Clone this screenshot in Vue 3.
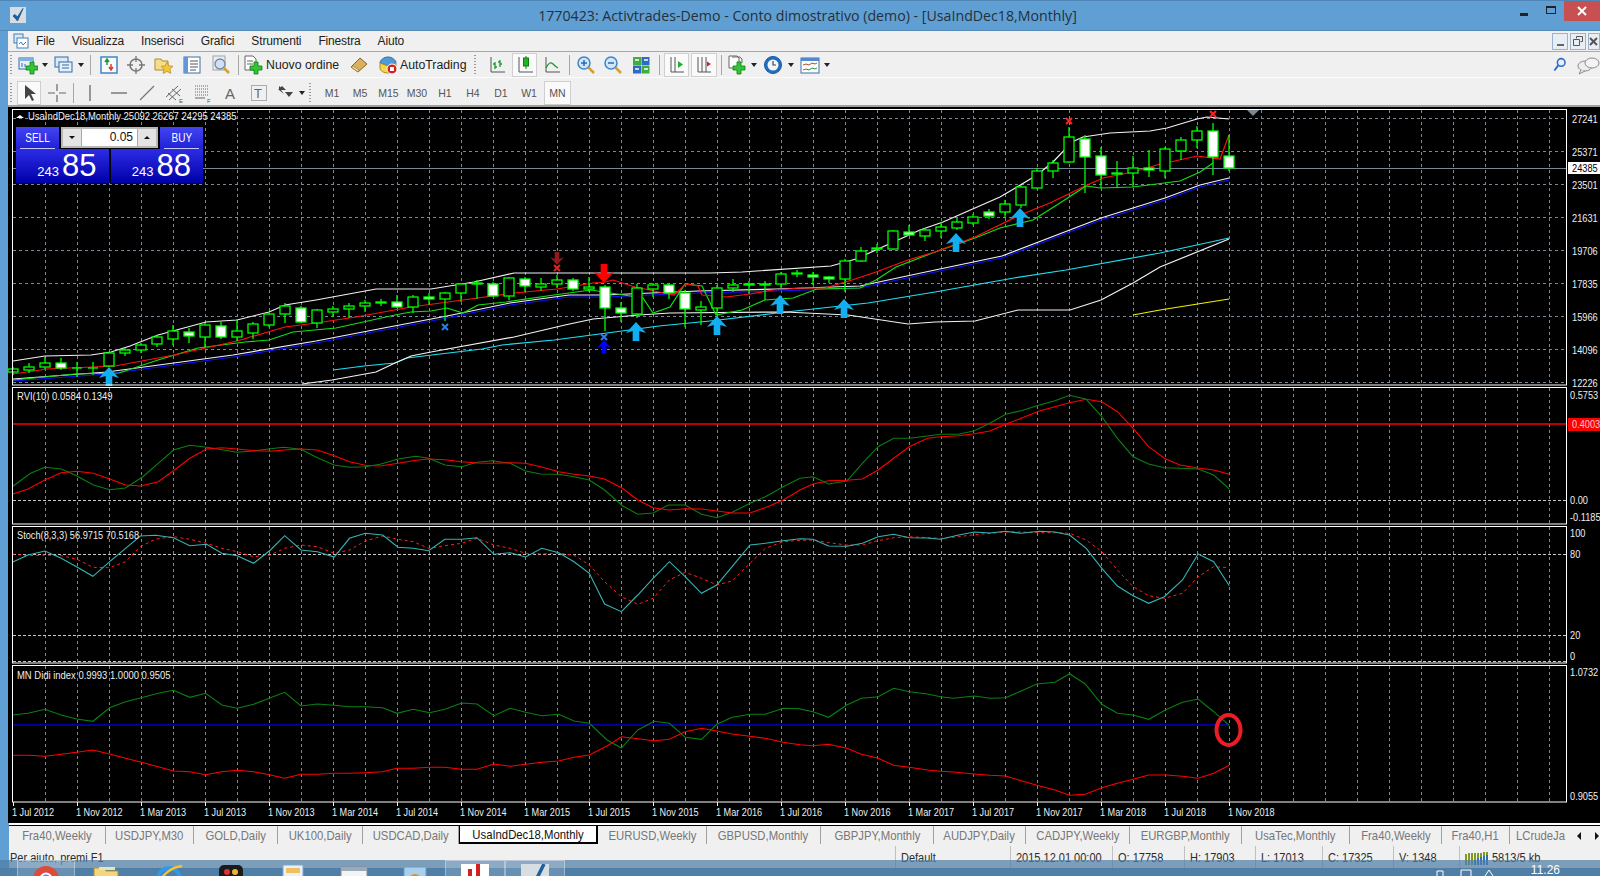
<template>
  <div class="page">
    <div class="window">
      <div class="titlebar">
        <svg class="appicon" viewBox="0 0 16 16"><rect width="16" height="16" fill="#d8dde2" /><path d="M3 9l3 3 1.500 2L13 1.500 7.500 10 5 7.500z" fill="#1c5f9e" stroke="#1c5f9e" /></svg>
        <span class="title">1770423: Activtrades-Demo - Conto dimostrativo (demo) - [UsaIndDec18,Monthly]</span>
        <span class="winbtn"><i class="glyph-min"></i></span>
        <span class="winbtn"><i class="glyph-max"></i></span>
        <span class="winbtn close">
          <svg width="10" height="10" viewBox="0 0 10 10"><path d="M1 1l8 8M9 1L1 9" stroke="#fff" stroke-width="2" /></svg>
        </span>
      </div>

      <div class="menubar">
        <svg class="menuicon" viewBox="0 0 16 16"><rect x="1" y="1" width="9" height="9" fill="#dbe8f5" stroke="#3f7fc0" /><rect x="4" y="5" width="11" height="10" fill="#fff" stroke="#3f7fc0" /><path d="M6 11l2-2 2 3 3-3" fill="none" stroke="#3f7fc0" /></svg>
        <span v-for="m in menus" :key="m" class="menuitem">{{ m }}</span>
        <div class="mdi">
          <span class="mdibtn"><i class="m-min"></i></span>
          <span class="mdibtn"><svg width="10" height="10" viewBox="0 0 10 10"><path d="M3.500 2.500V.5h6v5h-2M.5 3.500h6v6h-6z" fill="none" stroke="#555" /></svg></span>
          <span class="mdibtn last"><svg width="9" height="9" viewBox="0 0 9 9"><path d="M1 1l7 7M8 1L1 8" stroke="#555" stroke-width="2" /></svg></span>
        </div>
      </div>

      <div class="toolbar row1">
        <template v-for="(t, i) in row1" :key="i">
          <span v-if="t.k === 'grip'" class="grip" :style="{ width: t.w + 'px' }"></span>
          <span v-else-if="t.k === 'sep'" class="sep" :style="{ width: t.w + 'px' }"></span>
          <span v-else-if="t.k === 'drop'" class="drop" :style="{ width: t.w + 'px' }"><i></i></span>
          <span v-else-if="t.k === 'gap'" :style="{ width: t.w + 'px' }"></span>
          <span v-else-if="t.k === 'text'" class="tblabel" :style="{ width: t.w + 'px' }">{{ t.text }}</span>
          <span v-else class="tbbtn" :class="{ active: t.on }" :style="{ width: t.w + 'px' }">
            <svg width="20" height="20" viewBox="0 0 20 20" v-html="icons[t.k]"></svg>
          </span>
        </template>
        <div class="tbright">
          <svg width="20" height="20" viewBox="0 0 20 20" v-html="icons.search"></svg>
          <svg class="chat" width="24" height="20" viewBox="0 0 24 20" v-html="icons.chat"></svg>
        </div>
      </div>

      <div class="toolbar row2">
        <template v-for="(t, i) in row2" :key="i">
          <span v-if="t.k === 'grip'" class="grip" :style="{ width: t.w + 'px' }"></span>
          <span v-else-if="t.k === 'sep'" class="sep" :style="{ width: t.w + 'px' }"></span>
          <span v-else-if="t.k === 'drop'" class="drop" :style="{ width: t.w + 'px' }"><i></i></span>
          <span v-else-if="t.k === 'gap'" :style="{ width: t.w + 'px' }"></span>
          <span v-else-if="t.k === 'tf'" class="tbbtn tf" :class="{ active: t.on }" :style="{ width: t.w + 'px' }">{{ t.text }}</span>
          <span v-else class="tbbtn" :class="{ active: t.on }" :style="{ width: t.w + 'px' }">
            <svg width="20" height="20" viewBox="0 0 20 20" v-html="icons[t.k]"></svg>
          </span>
        </template>
      </div>

      <div class="chart">
        <!-- main pane -->
        <svg class="pane" width="1592" height="279" viewBox="8 107 1592 279">
          <g class="grid">
            <line v-for="x in vgrid" :key="x" :x1="x" :x2="x" y1="110" y2="385" />
            <line v-for="p in prices" :key="p[0]" x1="13" x2="1566" :y1="p[1]" :y2="p[1]" />
          </g>
          <line class="priceline" x1="13" x2="1566" y1="168" y2="168" />
          <polyline v-for="l in mainLines" :key="l.id" class="series main" :stroke="l.color" :points="l.points" />
          <g v-for="c in candles" :key="c.x">
            <line class="wick" :x1="c.x" :x2="c.x" :y1="c.high" :y2="c.low" />
            <line v-if="c.top === c.bot" class="wick" :x1="c.x - 5" :x2="c.x + 5" :y1="c.top" :y2="c.top" />
            <rect v-else class="body" :class="{ bear: c.bear }" :x="c.x - 5" :width="10" :y="c.top" :height="c.bot - c.top" />
          </g>
          <path v-for="a in upArrows" :key="a" :d="arrowUp(a[0], a[1], 19, 10)" fill="#12aef0" />
          <path :d="arrowUp(604, 340, 13, 7)" fill="#0000ff" />
          <path :d="arrowDown(604, 283, 19, 10)" fill="#ff0000" />
          <path :d="arrowDown(557, 265, 13, 7)" fill="#8a1c1c" />
          <path v-for="m in marks" :key="m[0]" :d="cross(m[0], m[1])" :stroke="m[2]" class="mark" />
          <path d="M1246 109h14l-7 7z" fill="#7a8794" />
          <rect class="frame" x="12.500" y="109.500" width="1554" height="275.500" />
          <path d="M16 118l4-3 4 3z" fill="#fff" />
          <text class="lbl" transform="translate(28 120) scale(.86 1)">UsaIndDec18,Monthly  25092 26267 24295 24385</text>
          <text v-for="p in prices" :key="'t' + p[0]" class="lbl" :transform="`translate(1572 ${p[1] + 5}) scale(.84 1)`">{{ p[0] }}</text>
          <rect x="1568" y="162" width="32" height="12" fill="#fff" />
          <text class="lbl dark" transform="translate(1572 172) scale(.84 1)">24385</text>
        </svg>

        <!-- RVI -->
        <svg class="pane" width="1592" height="139" viewBox="8 386 1592 139">
          <g class="grid"><line v-for="x in vgrid" :key="x" :x1="x" :x2="x" y1="388" y2="524" /></g>
          <line class="level" x1="13" x2="1566" y1="500" y2="500" />
          <line x1="13" x2="1566" y1="424" y2="424" stroke="#ff0000" stroke-width="1.500" />
          <polyline class="series" stroke="#0a8010" :points="rviGreen" />
          <polyline class="series" stroke="#ff0000" :points="rviRed" />
          <rect class="frame" x="12.500" y="387.500" width="1554" height="136.500" />
          <text class="lbl" transform="translate(17 400) scale(.86 1)">RVI(10) 0.0584 0.1349</text>
          <text class="lbl" transform="translate(1570 399) scale(.84 1)">0.5753</text>
          <rect x="1568" y="418" width="32" height="13" fill="#ff0000" />
          <text class="lbl" fill-opacity=".85" transform="translate(1572 428) scale(.84 1)">0.4003</text>
          <text class="lbl" transform="translate(1570 504) scale(.84 1)">0.00</text>
          <text class="lbl" transform="translate(1570 521) scale(.84 1)">-0.1185</text>
        </svg>

        <!-- Stochastic -->
        <svg class="pane" width="1592" height="139" viewBox="8 525 1592 139">
          <g class="grid"><line v-for="x in vgrid" :key="x" :x1="x" :x2="x" y1="527" y2="663" /></g>
          <line class="level" x1="13" x2="1566" y1="554" y2="554" />
          <line class="level" x1="13" x2="1566" y1="635" y2="635" />
          <line class="level" x1="13" x2="1566" y1="661" y2="661" />
          <polyline class="series thin" stroke="#ff2020" stroke-dasharray="3 3" :points="stochRed" />
          <polyline class="series" stroke="#35b5b5" :points="stochTeal" />
          <rect class="frame" x="12.500" y="526.500" width="1554" height="136.500" />
          <text class="lbl" transform="translate(17 539) scale(.84 1)">Stoch(8,3,3) 56.9715 70.5168</text>
          <text class="lbl" transform="translate(1570 537) scale(.84 1)">100</text>
          <text class="lbl" transform="translate(1570 558) scale(.84 1)">80</text>
          <text class="lbl" transform="translate(1570 639) scale(.84 1)">20</text>
          <text class="lbl" transform="translate(1570 660) scale(.84 1)">0</text>
        </svg>

        <!-- Didi index + time axis -->
        <svg class="pane" width="1592" height="159" viewBox="8 664 1592 159">
          <g class="grid"><line v-for="x in vgrid" :key="x" :x1="x" :x2="x" y1="666" y2="802" /></g>
          <line x1="13" x2="1229" y1="725" y2="725" stroke="#0000c8" stroke-width="1.300" />
          <polyline class="series" stroke="#0a8010" :points="didiGreen" />
          <polyline class="series" stroke="#ff0000" :points="didiRed" />
          <ellipse cx="1228.500" cy="730" rx="12" ry="15" fill="none" stroke="#ee1c25" stroke-width="4" />
          <rect class="frame" x="12.500" y="665.500" width="1554" height="136.500" />
          <text class="lbl" transform="translate(17 679) scale(.86 1)">MN Didi index 0.9993 1.0000 0.9505</text>
          <text class="lbl" transform="translate(1570 676) scale(.84 1)">1.0732</text>
          <text class="lbl" transform="translate(1570 800) scale(.84 1)">0.9055</text>
          <g v-for="t in timeLabels" :key="t.x">
            <line class="tick" :x1="t.x" :x2="t.x" y1="802" y2="806" />
            <text class="lbl" :transform="`translate(${t.x - 1} 816) scale(.83 1)`">{{ t.text }}</text>
          </g>
        </svg>

        <!-- one click trading panel -->
        <div class="oneclick">
          <div class="octop">
            <span class="ocbtn"><em>SELL</em></span>
            <div class="lot">
              <span class="lotbtn"><i class="tri-down"></i></span>
              <span class="lotval">0.05</span>
              <span class="lotbtn"><i class="tri-up"></i></span>
            </div>
            <span class="ocbtn"><em>BUY</em></span>
          </div>
          <div class="ocprices">
            <div class="ocprice"><small>243</small><b>85</b></div>
            <div class="ocprice"><small>243</small><b>88</b></div>
          </div>
        </div>
      </div>

      <div class="tabs">
        <span v-for="t in tabs" :key="t.name + t.w" class="tab" :class="{ active: t.on, tail: t.tail }" :style="{ width: t.w + 'px' }"><em>{{ t.name }}</em></span>
        <span class="tabnav"><i class="nav-l"></i><i class="nav-r"></i></span>
      </div>

      <div class="status">
        <span v-for="s in status" :key="s.text" class="cell" :style="{ width: s.w + 'px' }"><em>{{ s.text }}</em></span>
        <span class="cell conn">
          <svg width="24" height="14" viewBox="0 0 24 14"><path d="M1 14V3M4 14V2M7 14V2M10 14V2M13 14V2M16 14V2M19 14V1M22 14V1" stroke="#7f9a1e" stroke-width="2" /><path d="M10 14V9M13 14V7M16 14V6M19 14V5M22 14V4" stroke="#2f6fc0" stroke-width="2" /></svg>
          <em>5813/5 kb</em>
        </span>
      </div>

      <div class="taskbar">
        <span class="tkbtn" :class="{ lit: k.lit }" v-for="k in taskItems" :key="k.id" :style="{ width: k.w + 'px' }">
          <svg width="30" height="30" viewBox="0 0 30 30" v-html="k.svg"></svg>
        </span>
        <div class="tray">
          <svg width="70" height="8" viewBox="0 0 70 8"><path d="M2 8V3h6v5M26 8V2h10v6M50 8l4-6 4 6" fill="none" stroke="#fff" /></svg>
          <span class="clock">11.26</span>
        </div>
      </div>
    </div>
  </div>
</template>

<script setup>
const menus = ["File", "Visualizza", "Inserisci", "Grafici", "Strumenti", "Finestra", "Aiuto"];

const plus = (x, y) =>
  `<path d="M${x - 2} ${y - 6}h4v4h4v4h-4v4h-4v-4h-4v-4h4z" fill="#35c435" stroke="#0b7d12" stroke-width=".8"/>`;

const icons = {
  newchart: `<rect x="1" y="3" width="14" height="11" fill="#e6f0fa" stroke="#2f6aa8"/><rect x="1" y="3" width="14" height="3" fill="#7fb0e0"/><path d="M4 12V8M7 12V9" stroke="#2f6aa8"/>${plus(14, 13)}`,
  profile: `<rect x="1" y="2" width="13" height="10" fill="#dbe8f5" stroke="#2f6aa8"/><rect x="5" y="7" width="13" height="10" fill="#e6f0fa" stroke="#2f6aa8"/><path d="M8 10h7M8 13h7" stroke="#2f6aa8"/>`,
  market: `<rect x="2" y="2" width="16" height="16" fill="#f7fbff" stroke="#3f86c6" stroke-width="1.500"/><path d="M8 10V5M6 7l2-3 2 3" fill="none" stroke="#1a9a2a" stroke-width="1.500"/><path d="M12 9v6M10 12l2 3 2-3" fill="none" stroke="#d8402a" stroke-width="1.500"/>`,
  crosshair: `<circle cx="10" cy="10" r="6" fill="none" stroke="#777" stroke-width="1.500"/><path d="M10 1v6M10 13v6M1 10h6M13 10h6" stroke="#777" stroke-width="1.300"/>`,
  folderstar: `<path d="M1 4h6l1 2h6v9H1z" fill="#f6dd8a" stroke="#b08a2c"/><path d="M13 7l1.800 3.800 4.200.5-3 2.900.8 4.200-3.800-2-3.800 2 .8-4.200-3-2.900 4.200-.5z" fill="#f2c53a" stroke="#b08a2c" stroke-width=".7"/>`,
  list: `<rect x="2" y="2" width="16" height="16" fill="#fff" stroke="#3f6fa8"/><rect x="2" y="2" width="4" height="16" fill="#5f9ad6"/><path d="M8 6h8M8 9h8M8 12h8M8 15h6" stroke="#555"/>`,
  magdoc: `<rect x="2" y="1" width="12" height="14" fill="#e8eef4" stroke="#9aa6b2"/><circle cx="9" cy="9" r="5" fill="#cfe2f5" stroke="#7a8794" stroke-width="1.300"/><path d="M13 13l5 5" stroke="#d8a020" stroke-width="2.500"/>`,
  order: `<path d="M2 1h8l3 3v11H2z" fill="#fff" stroke="#666"/><path d="M4 6h6M4 9h6" stroke="#666"/>${plus(13, 13)}`,
  book: `<path d="M2 12L11 3l7 6-9 8z" fill="#d8b060" stroke="#8a6420"/><path d="M2 12l7 5 1-2-6-4z" fill="#f4e0a8" stroke="#8a6420" stroke-width=".6"/>`,
  auto: `<path d="M2 8c0-3 4-6 8-6s8 3 8 6l-8 3z" fill="#4f9ad8" stroke="#2f6aa8"/><path d="M2 8l8 3 8-3v5c0 3-4 5-8 5s-8-2-8-5z" fill="#f2d54a" stroke="#b08a2c"/><circle cx="14" cy="14" r="5" fill="#d02020" stroke="#fff"/><rect x="12" y="12" width="4" height="4" fill="#fff"/>`,
  bars: `<path d="M4 2v15h14" fill="none" stroke="#555"/><path d="M8 14V7M8 9h-2M8 12h2M13 12V5M13 7h-2M13 9h2" fill="none" stroke="#1a9a2a" stroke-width="1.300"/>`,
  candle: `<path d="M4 2v15h14" fill="none" stroke="#555"/><path d="M11 1v13" stroke="#1a7a2a"/><rect x="8.500" y="3" width="5" height="8" fill="#22b422" stroke="#0b7d12"/>`,
  line: `<path d="M4 2v15h14" fill="none" stroke="#555"/><path d="M4 13c3-6 5-6 7-4s3 3 5 4" fill="none" stroke="#1a9a2a" stroke-width="1.300"/>`,
  zoomin: `<circle cx="8" cy="8" r="6" fill="#cfe6fa" stroke="#3f86c6" stroke-width="1.500"/><path d="M5 8h6M8 5v6" stroke="#2f6aa8" stroke-width="1.500"/><path d="M12.500 12.500l5.500 5.500" stroke="#d8a020" stroke-width="2.500"/>`,
  zoomout: `<circle cx="8" cy="8" r="6" fill="#cfe6fa" stroke="#3f86c6" stroke-width="1.500"/><path d="M5 8h6" stroke="#2f6aa8" stroke-width="1.500"/><path d="M12.500 12.500l5.500 5.500" stroke="#d8a020" stroke-width="2.500"/>`,
  tile: `<rect x="2" y="2" width="8" height="8" fill="#3fae3f"/><rect x="10.500" y="2" width="8" height="8" fill="#2f6ac8"/><rect x="2" y="10.500" width="8" height="8" fill="#2f6ac8"/><rect x="10.500" y="10.500" width="8" height="8" fill="#3fae3f"/><path d="M4 5h4M13 5h4M4 14h4M13 14h4" stroke="#fff" stroke-width="1.500"/>`,
  scroll: `<path d="M4 2v15h13M8 2v15" fill="none" stroke="#555"/><path d="M11 6v7l5-3.500z" fill="#1fb02f"/>`,
  shift: `<path d="M4 2v15h13M8 2v15" fill="none" stroke="#555"/><path d="M12 2v15" stroke="#555"/><path d="M17 9l-4-2.500v5z" fill="#d02020"/>`,
  template: `<path d="M2 1h8l2 2v10H2z" fill="#fff" stroke="#666"/><path d="M5 2h8l2 2v4" fill="none" stroke="#666"/>${plus(12, 13)}`,
  clock: `<circle cx="10" cy="10" r="8.500" fill="#1f6ec0" stroke="#155a9c"/><circle cx="10" cy="10" r="5.500" fill="#f2f6fa"/><path d="M10 6v4h3" fill="none" stroke="#444" stroke-width="1.200"/>`,
  periods: `<rect x="1" y="3" width="18" height="15" fill="#fff" stroke="#3f6fa8"/><rect x="1" y="3" width="18" height="3" fill="#4f8ad0"/><path d="M3 10l3-1 3 1 3-2 3 1 2-1" fill="none" stroke="#b04a2a"/><path d="M3 15l3-1 3 1 3-2 3 1 2-1" fill="none" stroke="#1a9a2a"/>`,
  search: `<circle cx="12" cy="7" r="4.500" fill="#e6f0fa" stroke="#2f6ac8" stroke-width="1.800"/><path d="M8.500 10.500l-4.500 6" stroke="#2f6ac8" stroke-width="2.200"/>`,
  chat: `<ellipse cx="9" cy="11" rx="7" ry="5" fill="#eee" stroke="#8a8a8a"/><path d="M5 15l-2 4 6-3" fill="#eee" stroke="#8a8a8a"/><ellipse cx="16" cy="8" rx="7" ry="5" fill="#f4f4f4" stroke="#8a8a8a"/>`,
  cursor: `<path d="M6 2v14l4-4 3 6 2-1-3-6h5z" fill="#444"/>`,
  cross: `<path d="M10 1v7M10 12v7M1 10h7M12 10h7" stroke="#666" stroke-width="1.200"/>`,
  vline: `<path d="M10 2v16" stroke="#666" stroke-width="1.300"/>`,
  hline: `<path d="M2 10h16" stroke="#666" stroke-width="1.300"/>`,
  trend: `<path d="M3 17L17 3" stroke="#777" stroke-width="1.300"/>`,
  channel: `<path d="M1 14L13 3M4 17L16 6M3 10l8 7M7 6l8 7" stroke="#666"/><text x="14" y="20" font-size="6" font-family="Liberation Sans" fill="#555">E</text>`,
  fibo: `<path d="M2 3h14M2 6h14M2 9h14M2 12h14" stroke="#666" stroke-dasharray="1 1"/><path d="M2 15h10" stroke="#666"/><text x="14" y="20" font-size="6" font-family="Liberation Sans" fill="#555">F</text>`,
  atext: `<text x="4" y="16" font-size="15" font-family="Liberation Sans" fill="#666">A</text>`,
  ttext: `<rect x="2.500" y="2.500" width="15" height="15" fill="none" stroke="#666" stroke-dasharray="1 1"/><text x="5" y="15" font-size="13" font-family="Liberation Sans" fill="#666">T</text>`,
  updown: `<path d="M4 3l5 4H6l3 4-5-4zM10 9h8l-4 5z" fill="#444"/><path d="M7 3l4 4H3z" fill="#444"/>`,
};

const row1 = [
  { k: "grip", w: 8 }, { k: "newchart", w: 24 }, { k: "drop", w: 10 }, { k: "profile", w: 28 }, { k: "drop", w: 6 },
  { k: "sep", w: 12 }, { k: "market", w: 26 }, { k: "crosshair", w: 28 }, { k: "folderstar", w: 28 }, { k: "list", w: 28 },
  { k: "magdoc", w: 30 }, { k: "sep", w: 4 }, { k: "order", w: 26 }, { k: "text", w: 76, text: "Nuovo ordine" },
  { k: "book", w: 33 }, { k: "auto", w: 25 }, { k: "text", w: 68, text: "AutoTrading" }, { k: "gap", w: 4 },
  { k: "grip", w: 10 }, { k: "gap", w: 2 }, { k: "bars", w: 26 }, { k: "gap", w: 2 }, { k: "candle", w: 25, on: true }, { k: "gap", w: 2 },
  { k: "line", w: 26 }, { k: "sep", w: 8 }, { k: "zoomin", w: 26 }, { k: "zoomout", w: 28 }, { k: "tile", w: 28 }, { k: "sep", w: 8 },
  { k: "gap", w: 1 }, { k: "scroll", w: 25, on: true }, { k: "gap", w: 2 }, { k: "shift", w: 26, on: true }, { k: "sep", w: 8 },
  { k: "template", w: 24 }, { k: "drop", w: 9 }, { k: "gap", w: 2 }, { k: "clock", w: 26 }, { k: "drop", w: 9 }, { k: "gap", w: 2 },
  { k: "periods", w: 26 }, { k: "drop", w: 8 },
];

const row2 = [
  { k: "grip", w: 8 }, { k: "gap", w: 1 }, { k: "cursor", w: 24, on: true }, { k: "gap", w: 2 }, { k: "cross", w: 28 }, { k: "sep", w: 5 },
  { k: "vline", w: 28 }, { k: "hline", w: 29 }, { k: "trend", w: 28 }, { k: "channel", w: 28 }, { k: "fibo", w: 28 }, { k: "atext", w: 28 },
  { k: "ttext", w: 28 }, { k: "updown", w: 24 }, { k: "drop", w: 10 }, { k: "grip", w: 9 }, { k: "gap", w: 2 },
  { k: "tf", w: 28, text: "M1" }, { k: "tf", w: 28, text: "M5" }, { k: "tf", w: 29, text: "M15" }, { k: "tf", w: 28, text: "M30" },
  { k: "tf", w: 28, text: "H1" }, { k: "tf", w: 28, text: "H4" }, { k: "tf", w: 28, text: "D1" }, { k: "tf", w: 28, text: "W1" },
  { k: "gap", w: 1 }, { k: "tf", w: 27, text: "MN", on: true },
];

const vgrid = Array.from({ length: 48 }, (_, i) => 45 + 32 * i);

const prices = [27241, 25371, 23501, 21631, 19706, 17835, 15966, 14096, 12226].map((p, i) => [p, 118 + 33 * i]);

// bars: high, body top, body bottom, low, bear (page pixels)
const bars = [
  [367, 369, 372, 375], [363, 367, 370, 373], [357, 363, 367, 369], [358, 363, 368, 370, 1], [362, 368, 368, 377], [362, 368, 368, 375],
  [352, 353, 366, 367], [348, 350, 353, 356], [343, 345, 350, 353], [335, 337, 344, 347], [325, 331, 339, 345], [328, 332, 336, 343, 1],
  [323, 325, 337, 348], [322, 326, 337, 339, 1], [319, 331, 337, 341], [322, 324, 333, 339], [312, 314, 325, 327], [303, 306, 314, 323],
  [306, 308, 322, 323, 1], [309, 310, 323, 328], [306, 309, 312, 317], [303, 306, 309, 318], [300, 303, 306, 312], [299, 302, 303, 306],
  [295, 302, 307, 308, 1], [295, 297, 307, 313], [293, 297, 299, 305, 1], [292, 293, 299, 321], [283, 284, 293, 302], [280, 283, 284, 299],
  [282, 284, 296, 297, 1], [277, 278, 296, 300], [277, 279, 286, 292, 1], [278, 284, 287, 291], [275, 280, 284, 288], [278, 280, 289, 291, 1],
  [277, 287, 289, 292], [285, 287, 308, 331, 1], [302, 308, 313, 322, 1], [284, 288, 314, 318], [283, 285, 289, 297], [283, 285, 293, 299, 1],
  [290, 293, 309, 327, 1], [301, 307, 310, 325], [285, 288, 308, 315], [279, 285, 288, 292], [281, 284, 285, 294], [281, 284, 285, 300],
  [272, 274, 284, 288], [270, 273, 274, 277], [272, 275, 277, 285, 1], [276, 277, 279, 283, 1], [259, 261, 279, 292], [247, 251, 261, 262],
  [244, 248, 249, 253], [230, 231, 249, 250], [225, 232, 235, 236, 1], [228, 230, 236, 241], [222, 227, 231, 238], [218, 222, 228, 230],
  [214, 217, 223, 225], [209, 212, 216, 219, 1], [200, 204, 212, 217], [185, 187, 205, 208], [168, 171, 188, 189], [160, 163, 171, 178],
  [127, 137, 162, 163], [135, 139, 157, 193, 1], [147, 156, 175, 188, 1], [161, 173, 174, 187], [156, 168, 173, 187], [150, 168, 170, 177, 1],
  [147, 149, 171, 178], [137, 140, 151, 160], [126, 131, 140, 148], [123, 131, 157, 175, 1], [135, 156, 168, 171, 1],
];
const candles = bars.map((b, i) => ({ x: 13 + 16 * i, high: b[0], top: b[1], bot: b[2], low: b[3], bear: !!b[4] }));

const pts = (a) => {
  let s = "";
  for (let i = 0; i < a.length; i += 2) s += a[i] + "," + a[i + 1] + " ";
  return s;
};
// crop readings: left half is 1.96 wide per px, right half starts at x=800
const crop = (left, right, oy) => {
  const out = [];
  for (let i = 0; i < left.length; i += 2) out.push((left[i] / 1.96).toFixed(1), (oy + left[i + 1] / 3).toFixed(1));
  for (let i = 0; i < right.length; i += 2) out.push((800 + right[i] / 1.9216).toFixed(1), (oy + right[i + 1] / 3).toFixed(1));
  return pts(out);
};

const mainLines = [
  { id: "cyan", color: "#1fe0f5", points: pts([333, 370, 364, 366, 395, 363, 407, 358, 482, 349, 502, 345, 554, 340, 607, 333, 659, 326, 710, 321, 777, 313, 868, 303, 935, 292, 1014, 278, 1066, 270, 1160, 253, 1229, 238]) },
  { id: "lower", color: "#f2f2f2", points: pts([302, 384, 332, 380, 376, 372, 395, 363, 411, 356, 431, 352, 514, 337, 565, 325, 593, 319, 639, 315, 670, 313, 785, 312, 848, 315, 908, 324, 935, 322, 975, 321, 1018, 310, 1070, 310, 1101, 300, 1133, 283, 1160, 267, 1229, 239]) },
  { id: "yellow", color: "#f2f000", points: pts([1133, 315, 1160, 310, 1229, 299]) },
  { id: "blue", color: "#1010ff", points: pts([13, 381, 107, 374, 233, 357, 316, 343, 368, 333, 447, 318, 510, 305, 569, 297, 605, 297, 698, 293, 777, 291, 860, 288, 935, 272, 1002, 258, 1101, 220, 1165, 200, 1200, 187, 1229, 180]) },
  { id: "midw", color: "#f2f2f2", points: pts([13, 379, 107, 372, 233, 355, 316, 341, 368, 331, 447, 316, 510, 303, 569, 295, 605, 295, 698, 291, 777, 289, 860, 286, 935, 270, 1002, 256, 1101, 218, 1165, 198, 1200, 185, 1229, 178]) },
  { id: "upper", color: "#f2f2f2", points: pts([13, 361, 45, 356, 91, 355, 111, 352, 130, 346, 158, 335, 206, 322, 237, 320, 269, 312, 285, 305, 316, 300, 376, 289, 431, 289, 474, 282, 514, 273, 593, 273, 645, 273, 710, 273, 742, 272, 831, 266, 856, 259, 920, 230, 943, 222, 1000, 197, 1017, 187, 1037, 175, 1053, 162, 1072, 142, 1083, 137, 1110, 133, 1150, 131, 1167, 128, 1197, 119, 1207, 117, 1229, 119]) },
  { id: "green", color: "#12e012", points: pts([13, 380, 75, 374, 119, 373, 158, 360, 198, 348, 245, 342, 269, 340, 293, 332, 336, 328, 395, 315, 411, 312, 431, 311, 447, 308, 463, 313, 478, 305, 506, 302, 554, 295, 591, 290, 643, 298, 653, 313, 670, 307, 685, 284, 702, 286, 716, 315, 742, 310, 765, 300, 793, 298, 817, 289, 860, 288, 876, 280, 896, 267, 935, 252, 975, 238, 1000, 228, 1033, 220, 1060, 203, 1086, 186, 1100, 188, 1133, 187, 1180, 181, 1200, 172, 1213, 163]) },
  { id: "red", color: "#ff1010", points: pts([13, 374, 47, 369, 115, 366, 174, 355, 237, 341, 285, 327, 316, 323, 356, 317, 411, 307, 463, 300, 514, 293, 557, 289, 593, 283, 605, 282, 613, 280, 635, 287, 659, 292, 674, 295, 686, 284, 698, 286, 702, 295, 726, 297, 750, 294, 773, 290, 801, 288, 825, 288, 852, 280, 876, 272, 908, 260, 935, 252, 975, 237, 1020, 215, 1050, 203, 1085, 186, 1103, 178, 1133, 172, 1157, 165, 1197, 156, 1220, 159, 1229, 135]) },
];

const upArrows = [[109, 367], [636, 322], [717, 316], [780, 295], [844, 299], [956, 233], [1020, 208]];
// len: tip to tail, w: half the head width
const arrowUp = (x, y, len, w) => {
  const h = w + 1;
  const s = w / 3;
  return `M${x} ${y}L${x + w} ${y + h}L${x + s} ${y + h - 2}V${y + len}H${x - s}V${y + h - 2}L${x - w} ${y + h}z`;
};
const arrowDown = (x, y, len, w) => {
  const h = w + 1;
  const s = w / 3;
  return `M${x} ${y}L${x + w} ${y - h}L${x + s} ${y - h + 2}V${y - len}H${x - s}V${y - h + 2}L${x - w} ${y - h}z`;
};
const cross = (x, y) => `M${x - 3} ${y - 3}l6 6M${x + 3} ${y - 3}l-6 6`;
const marks = [[445, 327, "#2a7fe8"], [604, 337, "#2a7fe8"], [557, 268, "#e02020"], [1069, 121, "#ff2020"], [1213, 114, "#ff2020"]];

const rviGreen = crop(
  [24, 305, 60, 265, 88, 247, 120, 252, 150, 272, 183, 300, 215, 314, 246, 309, 280, 275, 310, 235, 340, 195, 372, 181, 405, 187, 435, 194, 465, 202, 500, 197, 530, 191, 556, 187, 590, 193, 622, 218, 655, 240, 685, 247, 716, 245, 745, 238, 780, 222, 815, 214, 840, 220, 872, 240, 905, 245, 935, 232, 965, 227, 1000, 235, 1030, 258, 1060, 267, 1095, 268, 1125, 275, 1155, 285, 1185, 315, 1220, 362, 1250, 388, 1280, 384, 1310, 360, 1343, 360, 1375, 388, 1405, 398, 1435, 382, 1470, 355, 1500, 335, 1535, 305, 1568, 280],
  [0, 280, 25, 275, 55, 297, 90, 288, 120, 235, 150, 185, 180, 160, 210, 160, 245, 153, 270, 148, 305, 148, 335, 137, 365, 115, 395, 88, 425, 77, 460, 60, 490, 47, 518, 31, 550, 43, 580, 95, 610, 160, 640, 215, 670, 237, 700, 248, 730, 250, 765, 252, 795, 270, 825, 312],
  385
);
const rviRed = crop(
  [24, 328, 55, 312, 88, 285, 120, 263, 150, 259, 183, 265, 215, 282, 246, 300, 275, 303, 310, 290, 340, 257, 372, 220, 405, 192, 435, 188, 465, 192, 500, 197, 530, 199, 556, 195, 590, 192, 622, 195, 655, 212, 685, 230, 716, 241, 745, 243, 780, 235, 815, 226, 840, 222, 872, 224, 905, 230, 935, 234, 965, 235, 1000, 233, 1030, 235, 1060, 245, 1095, 260, 1125, 268, 1155, 273, 1185, 282, 1220, 310, 1250, 345, 1280, 368, 1310, 375, 1343, 371, 1375, 372, 1405, 378, 1435, 384, 1470, 384, 1500, 368, 1535, 345, 1568, 315],
  [0, 315, 25, 297, 55, 287, 90, 286, 120, 282, 150, 255, 180, 220, 210, 185, 245, 160, 270, 155, 305, 152, 335, 146, 365, 138, 395, 118, 425, 100, 460, 78, 490, 65, 518, 53, 550, 43, 580, 50, 610, 80, 640, 130, 670, 185, 700, 220, 730, 240, 765, 249, 795, 255, 825, 268],
  385
);
const stochTeal = crop(
  [24, 532, 55, 510, 88, 498, 120, 520, 150, 545, 182, 574, 215, 530, 246, 490, 275, 453, 305, 451, 340, 458, 372, 482, 405, 478, 435, 505, 465, 512, 497, 535, 530, 495, 558, 452, 590, 495, 622, 500, 655, 516, 685, 460, 716, 445, 750, 450, 780, 487, 810, 490, 840, 497, 872, 463, 905, 463, 935, 458, 968, 508, 1000, 503, 1030, 516, 1062, 490, 1095, 503, 1125, 530, 1155, 565, 1185, 657, 1218, 680, 1250, 630, 1280, 580, 1312, 530, 1343, 575, 1375, 625, 1405, 600, 1435, 545, 1470, 480, 1500, 475, 1535, 467, 1568, 461],
  [0, 461, 25, 463, 55, 483, 90, 484, 120, 475, 150, 455, 180, 448, 210, 458, 245, 459, 270, 463, 305, 450, 335, 441, 365, 444, 395, 439, 425, 445, 460, 439, 490, 441, 518, 450, 550, 490, 580, 550, 610, 603, 640, 632, 670, 655, 700, 635, 735, 585, 765, 507, 795, 530, 825, 602],
  385
);
const stochRed = crop(
  [24, 507, 55, 512, 88, 510, 120, 512, 150, 522, 182, 547, 215, 548, 246, 530, 275, 485, 305, 462, 340, 455, 372, 463, 405, 475, 435, 490, 465, 500, 497, 515, 530, 510, 558, 490, 590, 480, 622, 485, 655, 505, 685, 495, 716, 468, 750, 453, 780, 463, 810, 470, 840, 490, 872, 482, 905, 475, 935, 460, 968, 480, 1000, 490, 1030, 505, 1062, 507, 1095, 505, 1125, 510, 1155, 540, 1185, 590, 1218, 635, 1250, 658, 1280, 640, 1312, 585, 1343, 562, 1375, 580, 1405, 600, 1435, 588, 1470, 535, 1500, 490, 1535, 470, 1568, 466],
  [0, 466, 25, 465, 55, 473, 90, 480, 120, 480, 150, 467, 180, 458, 210, 455, 245, 458, 270, 460, 305, 455, 335, 449, 365, 445, 395, 441, 425, 441, 460, 443, 490, 443, 518, 445, 550, 465, 580, 500, 610, 555, 640, 605, 670, 632, 700, 640, 735, 625, 765, 575, 795, 545, 825, 548],
  385
);
const didiGreen = crop(
  [24, 165, 55, 160, 88, 148, 120, 165, 150, 177, 182, 184, 215, 143, 246, 125, 277, 113, 310, 100, 340, 91, 372, 112, 403, 100, 435, 135, 465, 145, 497, 133, 530, 113, 558, 97, 590, 138, 622, 132, 655, 136, 685, 140, 716, 140, 750, 143, 778, 160, 810, 148, 842, 158, 872, 148, 905, 129, 935, 132, 968, 167, 1000, 145, 1030, 157, 1062, 167, 1095, 163, 1125, 183, 1155, 190, 1190, 240, 1218, 264, 1250, 210, 1282, 184, 1312, 190, 1343, 232, 1375, 238, 1405, 193, 1435, 172, 1470, 163, 1500, 163, 1535, 145, 1568, 146],
  [0, 147, 25, 155, 55, 172, 90, 135, 118, 115, 150, 110, 180, 85, 210, 95, 245, 102, 270, 110, 295, 115, 335, 108, 365, 115, 395, 113, 425, 93, 455, 72, 490, 67, 518, 41, 548, 72, 580, 133, 610, 160, 640, 165, 670, 178, 705, 148, 735, 127, 765, 117, 795, 155, 825, 196],
  660
);
const didiRed = crop(
  [24, 286, 55, 286, 88, 289, 120, 283, 150, 277, 182, 270, 215, 282, 246, 295, 277, 307, 310, 320, 340, 333, 372, 335, 403, 344, 435, 335, 465, 331, 497, 335, 530, 345, 558, 355, 590, 343, 622, 343, 655, 340, 685, 340, 716, 338, 750, 335, 778, 325, 810, 325, 842, 322, 872, 322, 905, 328, 935, 328, 968, 312, 1000, 319, 1030, 313, 1062, 307, 1095, 303, 1125, 292, 1155, 285, 1190, 258, 1218, 230, 1250, 236, 1282, 242, 1312, 238, 1343, 215, 1375, 205, 1405, 213, 1435, 222, 1470, 229, 1500, 235, 1535, 247, 1568, 254],
  [0, 254, 25, 257, 55, 253, 90, 265, 118, 283, 150, 295, 180, 316, 210, 322, 245, 330, 270, 334, 295, 336, 335, 342, 365, 346, 395, 348, 425, 362, 455, 376, 490, 390, 518, 406, 548, 403, 580, 383, 610, 370, 640, 358, 670, 345, 705, 345, 735, 349, 765, 355, 795, 340, 825, 316],
  660
);

const months = ["Jul", "Nov", "Mar"];
const timeLabels = Array.from({ length: 20 }, (_, i) => {
  const m = months[i % 3];
  const y = 2012 + Math.floor((i + 1) / 3);
  return { x: 13 + 64 * i, text: `1 ${m} ${y}` };
});

const tabs = [
  { name: "Fra40,Weekly", w: 97 }, { name: "USDJPY,M30", w: 88 }, { name: "GOLD,Daily", w: 84 }, { name: "UK100,Daily", w: 85 },
  { name: "USDCAD,Daily", w: 96 }, { name: "UsaIndDec18,Monthly", w: 139, on: true }, { name: "EURUSD,Weekly", w: 109 },
  { name: "GBPUSD,Monthly", w: 114 }, { name: "GBPJPY,Monthly", w: 113 }, { name: "AUDJPY,Daily", w: 92 }, { name: "CADJPY,Weekly", w: 104 },
  { name: "EURGBP,Monthly", w: 112 }, { name: "UsaTec,Monthly", w: 108 }, { name: "Fra40,Weekly", w: 92 }, { name: "Fra40,H1", w: 68 },
  { name: "LCrudeJa", w: 60, tail: true },
];

const status = [
  { text: "Per aiuto, premi F1", w: 887 }, { text: "Default", w: 115 }, { text: "2015.12.01 00:00", w: 102 }, { text: "O: 17758", w: 72 },
  { text: "H: 17903", w: 71 }, { text: "L: 17013", w: 67 }, { text: "C: 17325", w: 71 }, { text: "V: 1348", w: 66 },
];

const taskItems = [
  { id: "chrome", w: 58, lit: true, svg: `<circle cx="15" cy="15" r="13" fill="#dd4b39"/><path d="M15 15L27 20A13 13 0 0 1 2 15z" fill="#3aa757"/><circle cx="15" cy="15" r="5.500" fill="#4a8af4" stroke="#fff" stroke-width="2"/>` },
  { id: "files", w: 62, svg: `<path d="M3 4h10l2 3h12v20H3z" fill="#f3d57a" stroke="#b8962e"/><rect x="8" y="3" width="16" height="3" fill="#d8e8c8"/>` },
  { id: "ie", w: 64, svg: `<circle cx="15" cy="15" r="11" fill="none" stroke="#2f9ae8" stroke-width="4"/><path d="M3 22C8 10 18 3 28 2" fill="none" stroke="#f4c430" stroke-width="2.500"/>` },
  { id: "game", w: 60, svg: `<rect x="3" y="1" width="24" height="28" rx="5" fill="#1a1a1a"/><circle cx="11" cy="8" r="3" fill="#e0303a"/><circle cx="19" cy="8" r="3" fill="#f4b030"/>` },
  { id: "note", w: 62, svg: `<rect x="6" y="1" width="20" height="28" fill="#e8f0f8" stroke="#7fa8cc"/><rect x="9" y="4" width="14" height="5" fill="#f0c060"/>` },
  { id: "win", w: 62, svg: `<rect x="2" y="3" width="26" height="24" fill="#f4f4f4" stroke="#889"/><rect x="2" y="3" width="26" height="4" fill="#99aabb"/>` },
  { id: "orange", w: 60, svg: `<rect x="4" y="3" width="22" height="24" fill="#a8d0ec" stroke="#6a9cc0"/><circle cx="15" cy="16" r="6" fill="#e88a20"/>` },
  { id: "chart", w: 60, lit: true, svg: `<rect x="1" y="-1" width="28" height="32" fill="#fff"/><rect x="8" y="5" width="4" height="12" fill="#d02020"/><rect x="16" y="0" width="4" height="20" fill="#d02020"/>` },
  { id: "mt4", w: 60, lit: true, svg: `<rect x="1" y="-1" width="28" height="32" fill="#d8dde2"/><path d="M14 20L24 0" stroke="#1c5f9e" stroke-width="3.500"/>` },
];
</script>

<style>
html,
body {
  margin: 0;
  background: #fff;
}
</style>

<style scoped>
.page {
  width: 1616px;
  height: 876px;
  overflow: hidden;
  background: #fff;
  font-family: "Liberation Sans", Arial, sans-serif;
}
.window {
  position: relative;
  width: 1600px;
  height: 876px;
  box-sizing: border-box;
  display: flex;
  flex-direction: column;
  padding-left: 8px;
  background: #5f9fd3;
  overflow: hidden;
}
.titlebar {
  height: 31px;
  margin-left: -8px;
  flex: none;
  display: flex;
  align-items: flex-start;
  box-sizing: border-box;
  border-top: 1px solid #4f86b5;
  border-bottom: 1px solid #5588b4;
}
.appicon {
  width: 16px;
  height: 16px;
  margin: 6px 0 0 10px;
  flex: none;
}
.title {
  flex: 1;
  text-align: center;
  padding-left: 79px;
  line-height: 29px;
  font-family: "Open Sans", sans-serif;
  font-size: 14.200px;
  color: #26303a;
  white-space: nowrap;
}
.winbtn {
  width: 27px;
  height: 20px;
  display: flex;
  align-items: center;
  justify-content: center;
}
.winbtn.close {
  width: 36px;
  background: #c75050;
}
.glyph-min {
  width: 8px;
  height: 3px;
  background: #222;
  margin-top: 7px;
}
.glyph-max {
  width: 8px;
  height: 5px;
  border: 1px solid #222;
  border-top-width: 2px;
  margin-top: -3px;
}
.menubar {
  height: 21px;
  flex: none;
  display: flex;
  align-items: center;
  box-sizing: border-box;
  background: #f0f0f0;
  border-bottom: 1px solid #a8a8a8;
  font-size: 12px;
  letter-spacing: -0.15px;
  color: #222;
}
.menuicon {
  width: 16px;
  height: 16px;
  margin: 0 0 0 5px;
}
.menuitem {
  margin-left: 17px;
  display: inline-block;
}
.menuitem:first-of-type {
  margin-left: 7px;
}
.mdi {
  margin-left: auto;
  display: flex;
  gap: 2px;
}
.mdibtn {
  width: 16px;
  height: 17px;
  display: flex;
  align-items: center;
  justify-content: center;
  border: 1px solid #9db2cc;
  background: #e9eef5;
  box-sizing: border-box;
}
.mdibtn.last {
  width: 12px;
  justify-content: flex-start;
}
.m-min {
  width: 7px;
  height: 2px;
  margin-top: 7px;
  background: #666;
}
.toolbar {
  flex: none;
  display: flex;
  align-items: center;
  background: #f0f0f0;
  box-sizing: border-box;
  font-size: 12px;
  color: #222;
}
.row1 {
  height: 26px;
  padding-top: 1px;
  border-bottom: 1px solid #fcfcfc;
}
.row2 {
  height: 29px;
  padding-top: 2px;
  border-bottom: 2px solid #a0a0a0;
}
.tbbtn {
  flex: none;
  height: 24px;
  display: flex;
  align-items: center;
  justify-content: center;
  box-sizing: border-box;
}
.tbbtn.active {
  background: #fafafa;
  border: 1px solid #cfcfcf;
}
.tf {
  font-size: 10.500px;
  color: #555;
}
.grip {
  flex: none;
  height: 20px;
  background: repeating-linear-gradient(#9a9a9a 0 1px, #f0f0f0 1px 3px) no-repeat 2px 0 / 2px 100%;
}
.sep {
  flex: none;
  height: 20px;
  background: linear-gradient(#a8a8a8, #a8a8a8) no-repeat center / 1px 100%;
}
.drop {
  flex: none;
  display: flex;
  justify-content: center;
}
.drop i {
  width: 0;
  height: 0;
  border: 3px solid transparent;
  border-top: 4px solid #222;
  border-bottom: 0;
}
.tblabel {
  flex: none;
  white-space: nowrap;
  font-size: 12.300px;
}
.tbright {
  margin-left: auto;
  display: flex;
  align-items: center;
  gap: 8px;
  width: 49px;
  overflow: hidden;
}
.chat {
  flex: none;
}
.chart {
  position: relative;
  flex: none;
  height: 716px;
  display: flex;
  flex-direction: column;
  background: #000;
}
.pane {
  display: block;
  flex: none;
  overflow: visible;
}
.grid line {
  stroke: #778899;
  stroke-width: 1;
  stroke-dasharray: 3 3;
  shape-rendering: crispEdges;
}
.priceline {
  stroke: #778899;
  shape-rendering: crispEdges;
}
.level {
  stroke: #c8c8c8;
  stroke-dasharray: 3 2;
  shape-rendering: crispEdges;
}
.series {
  fill: none;
  stroke-width: 1.100;
}
.series.main {
  stroke-width: 1.200;
}
.series.thin {
  stroke-width: 1;
}
.wick {
  stroke: #00ff00;
  stroke-width: 1.300;
}
.body {
  fill: #000;
  stroke: #00ff00;
  stroke-width: 1.300;
}
.body.bear {
  fill: #fff;
}
.mark {
  fill: none;
  stroke-width: 2;
}
.frame {
  fill: none;
  stroke: #fff;
  stroke-width: 1;
}
.tick {
  stroke: #fff;
  shape-rendering: crispEdges;
}
.lbl {
  fill: #eee;
  font-family: "Liberation Sans", Arial, sans-serif;
  font-size: 11px;
  white-space: pre;
}
.lbl.dark {
  fill: #000;
}
.oneclick {
  position: absolute;
  left: 8px;
  top: 20px;
  width: 187px;
  color: #fff;
  background: #000;
}
.octop {
  height: 22px;
  display: flex;
  justify-content: space-between;
}
.ocbtn {
  width: 43px;
  background: linear-gradient(#4444f2, #2020d8);
  text-align: center;
  font-size: 13.500px;
  line-height: 21px;
  position: relative;
}
.ocbtn em {
  font-style: normal;
  display: inline-block;
  transform: scaleX(0.74);
}
.ocbtn::after {
  content: "";
  position: absolute;
  left: 4px;
  right: 4px;
  bottom: 0;
  height: 1px;
  background: #c8c8f4;
}
.lot {
  width: 97px;
  height: 21px;
  display: flex;
  background: #d8d8d8;
  border: 2px solid #b8b8b8;
  box-sizing: border-box;
}
.lotbtn {
  width: 18px;
  display: flex;
  align-items: center;
  justify-content: center;
  background: #e4e4e4;
  border-right: 1px solid #aaa;
}
.lotbtn:last-child {
  border-right: 0;
  border-left: 1px solid #aaa;
}
.tri-down,
.tri-up {
  width: 0;
  height: 0;
  border: 3px solid transparent;
}
.tri-down {
  border-top: 3px solid #111;
  border-bottom: 0;
}
.tri-up {
  border-bottom: 3px solid #111;
  border-top: 0;
}
.lotval {
  flex: 1;
  background: #fff;
  color: #111;
  font-size: 12px;
  text-align: right;
  padding-right: 4px;
  line-height: 17px;
}
.ocprices {
  display: flex;
  gap: 2px;
}
.ocprice {
  flex: 1;
  height: 34px;
  background: linear-gradient(#2c2ce6, #0000a8);
  display: flex;
  align-items: baseline;
  justify-content: flex-end;
  padding-right: 12px;
  gap: 3px;
  line-height: 34px;
}
.ocprice small {
  font-size: 13px;
}
.ocprice b {
  font-weight: 400;
  font-size: 31px;
}
.tabs {
  flex: none;
  height: 23px;
  box-sizing: border-box;
  border-top: 2px solid #fff;
  margin-left: 1px;
  padding-right: 0;
  display: flex;
  background: #f0f0f0;
  color: #777;
  font-size: 13px;
  overflow: hidden;
  box-shadow: inset 0 1px 0 #000;
}
.tab {
  flex: none;
  height: 18px;
  margin-top: 1px;
  display: flex;
  align-items: center;
  justify-content: center;
  box-sizing: border-box;
  border-right: 1px solid #a0a0a0;
  white-space: nowrap;
}
.tab.tail {
  border-right: 0;
  justify-content: flex-start;
  padding-left: 6px;
}
.tab.tail em {
  transform-origin: left;
}
.tab.active {
  height: 19px;
  margin-top: 0;
  background: #fff;
  color: #111;
  border: 1px solid #000;
  border-width: 1px 2px 2px 1px;
}
.tab em {
  font-style: normal;
  display: inline-block;
  transform: scaleX(0.87);
}
.tabnav {
  flex: 1;
  display: flex;
  justify-content: flex-end;
  align-items: center;
  gap: 14px;
  padding-right: 1px;
}
.nav-l,
.nav-r {
  width: 0;
  height: 0;
  border: 4px solid transparent;
}
.nav-l {
  border-right: 4px solid #111;
  border-left: 0;
}
.nav-r {
  border-left: 4px solid #111;
  border-right: 0;
}
.status {
  flex: 1;
  margin-left: 1px;
  display: flex;
  background: #f0f0f0;
  color: #2a2a2a;
  font-size: 12.500px;
}
.cell {
  flex: none;
  height: 22px;
  box-sizing: border-box;
  padding: 5px 0 0 5px;
  border-right: 1px solid #c0c0c0;
  white-space: nowrap;
}
.cell:first-child {
  padding-left: 1px;
}
.cell em {
  font-style: normal;
  display: inline-block;
  transform-origin: left;
  transform: scaleX(0.88);
}
.cell.conn {
  border: 0;
  padding-left: 5px;
  display: flex;
  gap: 3px;
  align-items: flex-start;
}
.taskbar {
  position: absolute;
  left: 0;
  right: 0;
  bottom: 0;
  height: 16px;
  display: flex;
  padding-left: 17px;
  overflow: hidden;
  background: linear-gradient(rgba(79, 126, 165, 0.72) 0 8px, #4f7ea6 8px);
}
.tkbtn {
  flex: none;
  height: 30px;
  display: flex;
  justify-content: center;
  box-sizing: border-box;
  padding-top: 4px;
}
.tkbtn.lit {
  background: rgba(255, 255, 255, 0.14);
  box-shadow: inset 0 0 0 1px rgba(255, 255, 255, 0.35);
}
.tray {
  margin-left: auto;
  display: flex;
  align-items: flex-start;
  gap: 26px;
  padding-right: 40px;
}
.tray svg {
  margin-top: 8px;
}
.clock {
  color: #fff;
  font-size: 12px;
  line-height: 12px;
  margin-top: 4px;
}
</style>
